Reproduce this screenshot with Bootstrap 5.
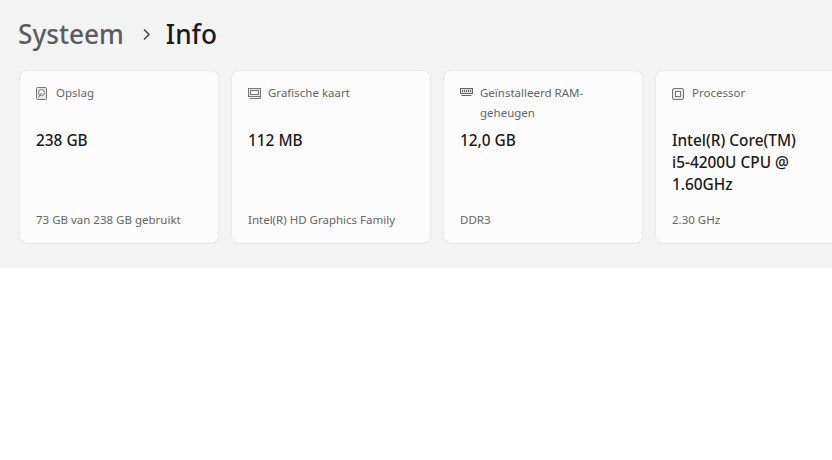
<!DOCTYPE html>
<html lang="nl">
<head>
<meta charset="utf-8">
<title>Info</title>
<link href="https://cdn.jsdelivr.net/npm/bootstrap@5.3.0/dist/css/bootstrap.min.css" rel="stylesheet">
<style>
html,body{background:#fff;overflow:hidden;font-family:"Noto Sans","Open Sans",sans-serif}
.sys-panel{background:#f3f3f3;height:268px;overflow:hidden;padding:0 0 0 19px}
.crumbs{height:70px;margin-left:-1px;padding-bottom:2px;font-size:26.2px;line-height:36px;font-weight:500;color:#1b1b1b}
.crumbs .dim{color:#5d5d5d}
.crumbs svg{margin:0 14px 0 17px;width:11px;height:15px}
.tiles{gap:12px;width:900px}
.tile{flex:0 0 200px;height:174px;background:#fbfbfb;border:1px solid #e9e9e9;border-bottom-color:#e2e2e2;border-radius:8px;padding:12px 16px 13px}
.tile-head{gap:7px;font-size:11.5px;line-height:20px;color:#666;min-height:40px}
.tile-head svg{flex:0 0 13px;width:13px;height:13px;margin-top:4px}
.tile-val{margin-top:7px;max-width:132px;font-size:15.4px;line-height:22px;font-weight:500;color:#1a1a1a}
.tile-foot{margin-top:auto;font-size:11.5px;line-height:20px;color:#666}
</style>
</head>
<body>
<div class="sys-panel">
  <div class="crumbs d-flex align-items-center">
    <span class="dim">Systeem</span>
    <svg viewBox="0 0 11 15" fill="none" stroke="#4a4a4a" stroke-width="1.6"><path d="M3 2.5 8 7.5l-5 5"/></svg>
    <span>Info</span>
  </div>
  <div class="tiles d-flex">
    <div class="tile d-flex flex-column">
      <div class="tile-head d-flex">
        <svg viewBox="0 0 13 13" fill="none" stroke="#777"><rect x=".5" y=".5" width="10" height="12" rx="1" fill="#e6e6e6"/><circle cx="5.5" cy="5.5" r="3" fill="#f6f6f6"/><path d="M2.5 10.5 5.5 6"/></svg>
        <span>Opslag</span>
      </div>
      <div class="tile-val">238 GB</div>
      <div class="tile-foot">73 GB van 238 GB gebruikt</div>
    </div>
    <div class="tile d-flex flex-column">
      <div class="tile-head d-flex">
        <svg viewBox="0 0 13 13" fill="none" stroke="#777"><rect x=".5" y="1.5" width="12" height="8" fill="#e6e6e6"/><rect x="2.5" y="3.5" width="8" height="4" fill="#f6f6f6"/><path d="M2 11.5h10.5M12.5 9.5v2"/></svg>
        <span>Grafische kaart</span>
      </div>
      <div class="tile-val">112 MB</div>
      <div class="tile-foot">Intel(R) HD Graphics Family</div>
    </div>
    <div class="tile d-flex flex-column">
      <div class="tile-head d-flex">
        <svg viewBox="0 0 13 13" fill="none" stroke="#666"><rect x=".5" y="1.5" width="12" height="5" fill="#ddd"/><path d="M2.5 3v2M4.5 3v2M6.5 3v2M8.5 3v2M10.5 3v2M1.5 8.5h10"/></svg>
        <span>Geïnstalleerd RAM-geheugen</span>
      </div>
      <div class="tile-val">12,0 GB</div>
      <div class="tile-foot">DDR3</div>
    </div>
    <div class="tile d-flex flex-column">
      <div class="tile-head d-flex">
        <svg viewBox="0 0 13 13" fill="none" stroke="#777"><rect x=".5" y="1.5" width="11" height="11" rx="1.5" fill="#e6e6e6"/><rect x="3.5" y="4.5" width="5" height="5" fill="#f6f6f6"/></svg>
        <span>Processor</span>
      </div>
      <div class="tile-val">Intel(R) Core(TM) i5-4200U CPU @ 1.60GHz</div>
      <div class="tile-foot">2.30 GHz</div>
    </div>
  </div>
</div>
<script src="https://cdn.jsdelivr.net/npm/bootstrap@5.3.0/dist/js/bootstrap.bundle.min.js"></script>
</body>
</html>
